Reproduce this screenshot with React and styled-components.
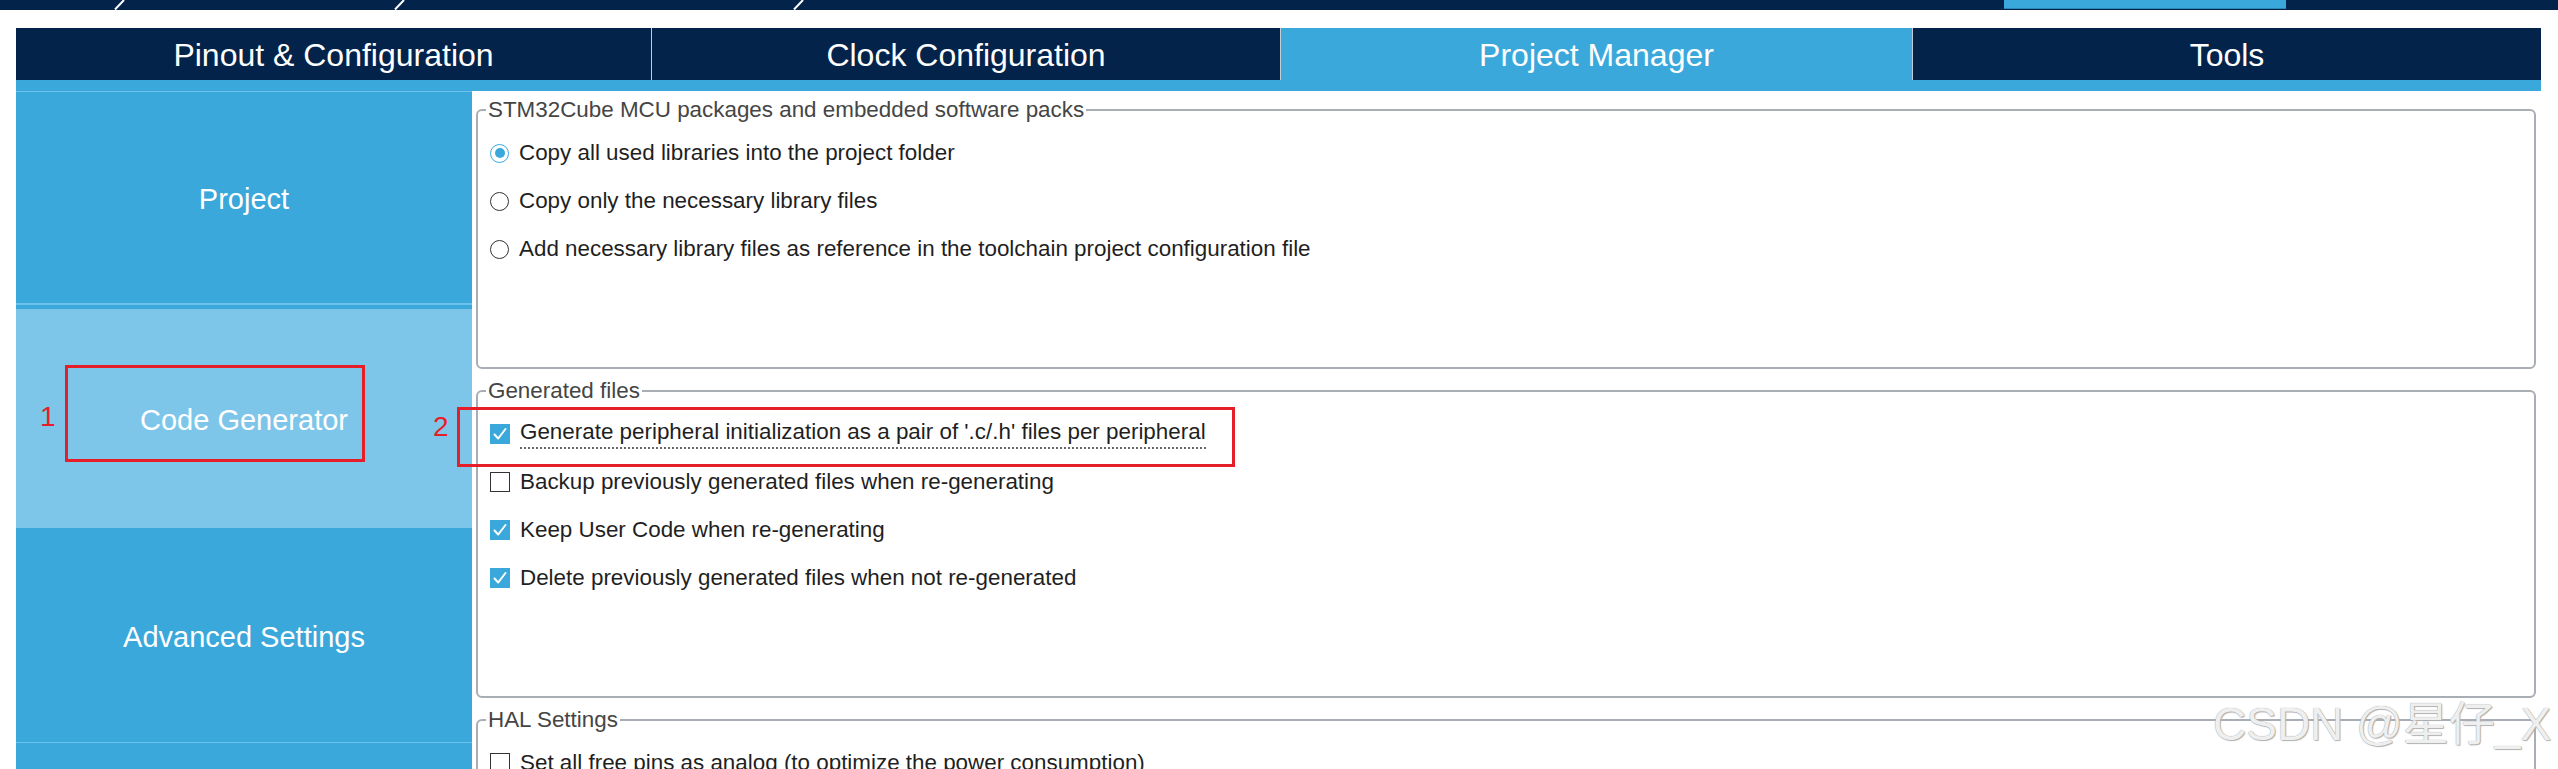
import React from "react";
import styled, { createGlobalStyle } from "styled-components";

const NAVY = "#03234b";
const BLUE = "#3aa8db";
const LIGHT = "#7ec6e9";
const SEP = "#6cc2ec";
const RED = "#e61e28";

const Global = createGlobalStyle`
  html, body { margin: 0; padding: 0; background: #fff; }
  body { font-family: "Liberation Sans", Arial, sans-serif; overflow: hidden; }
  * { box-sizing: border-box; }
`;

const Page = styled.div`
  position: relative;
  width: 2558px;
  height: 769px;
  overflow: hidden;
  background: #fff;
`;

const TopBar = styled.div`
  display: flex;
  align-items: flex-start;
  height: 10px;
  background: ${NAVY};
`;

const Spacer = styled.div`
  flex: none;
  width: ${(p) => p.$w}px;
`;

const Slash = styled.svg`
  flex: none;
  display: block;
  width: 12px;
  height: 10px;
`;

const ActiveCrumb = styled.div`
  flex: none;
  width: 282px;
  height: 9px;
  background: ${BLUE};
  border-bottom: 1px solid #2b86b9;
`;

const Main = styled.div`
  margin-top: 18px;
  padding: 0 17px 0 16px;
`;

const TabBar = styled.div`
  display: grid;
  grid-template-columns: 635px 629px 632px 1fr;
  height: 52px;
  background: ${NAVY};
`;

const Tab = styled.div`
  display: flex;
  align-items: center;
  justify-content: center;
  padding-top: 2px;
  background: ${(p) => (p.$active ? BLUE : NAVY)};
  color: #fff;
  font-size: 32px;
  & + & {
    border-left: 1px solid #c3cbd4;
  }
`;

const Strip = styled.div`
  height: 11px;
  background: ${BLUE};
`;

const Body = styled.div`
  display: flex;
  height: 678px;
`;

const Sidebar = styled.div`
  flex: none;
  width: 456px;
  display: flex;
  flex-direction: column;
  background: ${BLUE};
  border-top: 1px solid ${SEP};
`;

const SideItem = styled.div`
  flex: none;
  height: ${(p) => p.$h}px;
  display: flex;
  align-items: center;
  justify-content: center;
  padding-top: 4px;
  background: ${(p) => (p.$active ? LIGHT : BLUE)};
  color: #fff;
  font-size: 29px;
  border-bottom: ${(p) => p.$sep || 0}px solid ${SEP};
  margin-bottom: ${(p) => p.$mb || 0}px;
`;

const Content = styled.div`
  flex: 1;
  display: flex;
  flex-direction: column;
  gap: 10px;
  padding: 7px 5px 0 4px;
  background: #fff;
`;

const Group = styled.fieldset`
  flex: none;
  margin: 0;
  padding: 0;
  min-inline-size: auto;
  height: ${(p) => p.$h}px;
  border: 2px solid #a9aeb4;
  border-radius: 6px;
`;

const Legend = styled.legend`
  margin-left: 8px;
  padding: 0 2px;
  font-size: 22.4px;
  line-height: 24px;
  color: #454545;
`;

const Rows = styled.div`
  display: flex;
  flex-direction: column;
  padding: 7px 0 0 12px;
`;

const Row = styled.div`
  display: flex;
  align-items: center;
  height: 48px;
`;

const Radio = styled.span`
  flex: none;
  position: relative;
  width: 19px;
  height: 19px;
  border-radius: 50%;
  border: 1.5px solid ${(p) => (p.$on ? BLUE : "#333")};
  background: #fff;
  &::after {
    content: "";
    display: ${(p) => (p.$on ? "block" : "none")};
    position: absolute;
    left: 50%;
    top: 50%;
    width: 10px;
    height: 10px;
    margin: -5px 0 0 -5px;
    border-radius: 50%;
    background: ${BLUE};
  }
`;

const Box = styled.span`
  flex: none;
  display: flex;
  align-items: center;
  justify-content: center;
  width: 20px;
  height: 20px;
  background: ${(p) => (p.$on ? BLUE : "#fff")};
  border: 1.5px solid ${(p) => (p.$on ? BLUE : "#333")};
`;

const Label = styled.span`
  margin-left: 10px;
  font-size: 22.4px;
  line-height: 24px;
  color: #1f1f1f;
  white-space: nowrap;
  ${(p) =>
    p.$dotted &&
    `
    padding-bottom: 3px;
    border-bottom: 2px dotted #6a6a6a;
  `}
`;

const Mark = styled.div`
  position: absolute;
  left: ${(p) => p.$x}px;
  top: ${(p) => p.$y}px;
  width: ${(p) => p.$w}px;
  height: ${(p) => p.$h}px;
  border: 3px solid ${RED};
  pointer-events: none;
`;

const MarkNum = styled.div`
  position: absolute;
  left: ${(p) => p.$x}px;
  top: ${(p) => p.$y}px;
  font-size: 28px;
  line-height: 28px;
  color: ${RED};
`;

const Watermark = styled.div`
  position: absolute;
  left: 2213px;
  top: 701px;
  font-family: "Liberation Sans", "Noto Sans CJK SC", sans-serif;
  font-size: 46px;
  line-height: 46px;
  color: #efefef;
  white-space: nowrap;
  text-shadow: 0 0 1px #8a8a8a, 1px 1px 1px #b5b5b5;
`;

const Check = () => (
  <svg width="16" height="16" viewBox="0 0 16 16">
    <path d="M2.5 8.5 L6.2 12.5 L13.5 3" fill="none" stroke="#fff" strokeWidth="2" strokeLinecap="round" strokeLinejoin="round" />
  </svg>
);

const SlashIcon = () => (
  <Slash viewBox="0 0 12 10">
    <line x1="11" y1="0" x2="2" y2="9.5" stroke="#fff" strokeWidth="2" />
  </Slash>
);

const CheckRow = ({ on, dotted, children }) => (
  <Row>
    <Box $on={on}>{on && <Check />}</Box>
    <Label $dotted={dotted}>{children}</Label>
  </Row>
);

const RadioRow = ({ on, children }) => (
  <Row>
    <Radio $on={on} />
    <Label>{children}</Label>
  </Row>
);

export default function App() {
  return (
    <>
      <Global />
      <Page>
        <TopBar>
          <Spacer $w={113} />
          <SlashIcon />
          <Spacer $w={268} />
          <SlashIcon />
          <Spacer $w={387} />
          <SlashIcon />
          <Spacer $w={1200} />
          <ActiveCrumb />
        </TopBar>
        <Main>
          <TabBar>
            <Tab>Pinout &amp; Configuration</Tab>
            <Tab>Clock Configuration</Tab>
            <Tab $active>Project Manager</Tab>
            <Tab>Tools</Tab>
          </TabBar>
          <Strip />
          <Body>
            <Sidebar>
              <SideItem $h={213} $sep={2} $mb={4}>Project</SideItem>
              <SideItem $h={219} $active>Code Generator</SideItem>
              <SideItem $h={215} $sep={1}>Advanced Settings</SideItem>
              <SideItem $h={200} />
            </Sidebar>
            <Content>
              <Group $h={271}>
                <Legend>STM32Cube MCU packages and embedded software packs</Legend>
                <Rows>
                  <RadioRow on>Copy all used libraries into the project folder</RadioRow>
                  <RadioRow>Copy only the necessary library files</RadioRow>
                  <RadioRow>Add necessary library files as reference in the toolchain project configuration file</RadioRow>
                </Rows>
              </Group>
              <Group $h={319}>
                <Legend>Generated files</Legend>
                <Rows>
                  <CheckRow on dotted>Generate peripheral initialization as a pair of '.c/.h' files per peripheral</CheckRow>
                  <CheckRow>Backup previously generated files when re-generating</CheckRow>
                  <CheckRow on>Keep User Code when re-generating</CheckRow>
                  <CheckRow on>Delete previously generated files when not re-generated</CheckRow>
                </Rows>
              </Group>
              <Group $h={300}>
                <Legend>HAL Settings</Legend>
                <Rows>
                  <CheckRow>Set all free pins as analog (to optimize the power consumption)</CheckRow>
                </Rows>
              </Group>
            </Content>
          </Body>
        </Main>
        <Mark $x={65} $y={365} $w={300} $h={97} />
        <MarkNum $x={40} $y={403}>1</MarkNum>
        <Mark $x={457} $y={407} $w={778} $h={60} />
        <MarkNum $x={433} $y={413}>2</MarkNum>
        <Watermark>CSDN @星仔_X</Watermark>
      </Page>
    </>
  );
}
